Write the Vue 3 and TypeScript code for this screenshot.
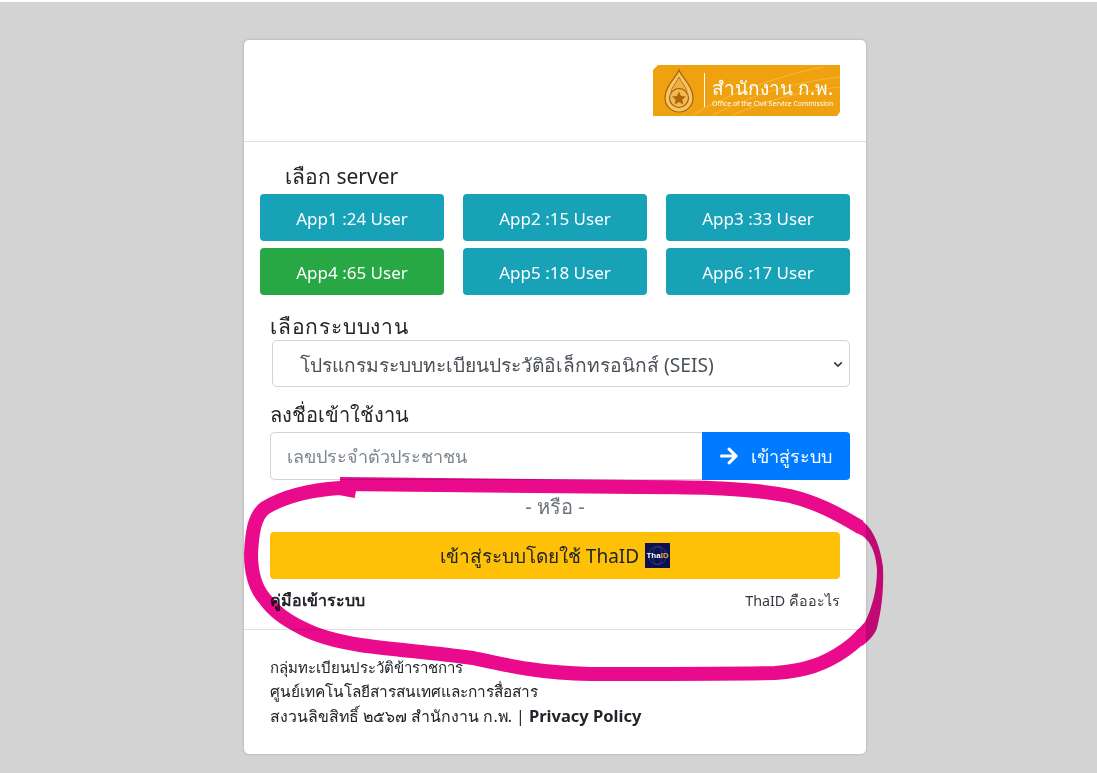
<template>
  <div class="page">
    <div class="card">
      <div class="card-header">
        <svg class="logo" viewBox="0 0 187 51" role="img">
          <path d="M5 0H187V47L184 51H0V5Z" fill="#f0a10f" />
          <path d="M60 50C95 32 135 18 187 12M80 50C110 36 150 26 187 22M40 50C80 26 130 10 170 2" fill="none" stroke="#f7c25a" stroke-width="0.7" />
          <path d="M26 5C29 13 40 21 40 33A14 14 0 0 1 12 33C12 21 23 13 26 5Z" fill="#f6c566" stroke="#a8650a" stroke-width="1.2" />
          <path d="M26 12C28 17 34 23 34 27H18C18 23 24 17 26 12Z" fill="#eeb040" stroke="#a8650a" stroke-width="0.8" />
          <circle cx="26" cy="33" r="9.500" fill="#f3b850" stroke="#9c5c08" stroke-width="1.1" />
          <path d="M26 26.500L28 31L33 31.500L29.300 34.800L30.300 39.600L26 37.100L21.700 39.600L22.700 34.800L19 31.500L24 31Z" fill="#b0640c" />
          <rect x="51" y="8" width="1" height="34" fill="#fff" />
          <text x="59" y="30" class="logo-th">สำนักงาน ก.พ.</text>
          <text x="59" y="41" class="logo-en">Office of the Civil Service Commission</text>
        </svg>
      </div>

      <div class="card-body">
        <h5 class="server-title">เลือก server</h5>
        <div class="server-grid">
          <button
            v-for="s in servers"
            :key="s.name"
            class="btn server"
            :class="{ active: s.active }"
          >
            {{ s.name }} :{{ s.users }} User
          </button>
        </div>

        <label class="field-label system-label" for="system">เลือกระบบงาน</label>
        <div class="select-wrap">
          <select id="system" class="system-select">
            <option>โปรแกรมระบบทะเบียนประวัติอิเล็กทรอนิกส์ (SEIS)</option>
          </select>
          <svg class="chevron" viewBox="0 0 12 8">
            <path d="M1.500 1.500L6 6L10.500 1.500" fill="none" stroke="#343a40" stroke-width="2" />
          </svg>
        </div>

        <label class="field-label login-label" for="cid">ลงชื่อเข้าใช้งาน</label>
        <div class="input-group">
          <input id="cid" class="cid-input" type="text" placeholder="เลขประจำตัวประชาชน" />
          <button class="btn login">
            <svg class="arrow" viewBox="0 0 448 512">
              <path
                fill="currentColor"
                d="M190.5 66.9l22.2-22.2c9.4-9.4 24.6-9.4 33.9 0L441 239c9.4 9.4 9.4 24.6 0 33.9L246.6 467.3c-9.4 9.4-24.6 9.4-33.9 0l-22.2-22.2c-9.5-9.5-9.3-25 .4-34.3L311.4 296H24c-13.3 0-24-10.7-24-24v-32c0-13.3 10.7-24 24-24h287.4L190.9 101.2c-9.8-9.3-10-24.8-.4-34.3z"
              />
            </svg>
            เข้าสู่ระบบ
          </button>
        </div>

        <div class="divider-text">- หรือ -</div>

        <button class="btn thaid">
          เข้าสู่ระบบโดยใช้ ThaID
          <span class="thaid-badge">
            <svg class="badge-globe" viewBox="0 0 25 25">
              <circle cx="12.500" cy="12.500" r="9" fill="none" stroke="#3c4580" stroke-width="0.8" />
              <ellipse cx="12.500" cy="12.500" rx="4.500" ry="9" fill="none" stroke="#3c4580" stroke-width="0.6" />
            </svg>
            <b>Tha</b><i>ID</i>
          </span>
        </button>

        <div class="links">
          <a class="manual">คู่มือเข้าระบบ</a>
          <a class="what">ThaID คืออะไร</a>
        </div>
      </div>

      <div class="card-footer">
        <div>กลุ่มทะเบียนประวัติข้าราชการ</div>
        <div class="line-wide">ศูนย์เทคโนโลยีสารสนเทศและการสื่อสาร</div>
        <div class="line-copy">สงวนลิขสิทธิ์ ๒๕๖๗ สำนักงาน ก.พ. | <strong>Privacy Policy</strong></div>
      </div>
    </div>

    <!-- วงปากกาสีชมพูที่วาดทับภาพ -->
    <svg class="scribble" viewBox="0 0 1097 773">
      <path
        class="ink"
        d="M356 489L340 486C310 488 283 495 265 506C254 514 252 532 251 552C251 570 254 584 264 596C274 610 286 618 302 626C317 634 335 639 360 643C395 648 430 650 473 656C510 664 540 671 590 672C650 672 720 672 775 671C805 669 825 662 845 648C852 643 858 638 863 632"
      />
      <path class="ink" d="M340 482C450 484 560 484 640 485C700 485 750 486 790 494C815 500 835 510 860 525" />
      <path
        class="ink-fill"
        d="M860 518C870 522 880 540 883 565C884 590 881 610 877 626C875 632 870 638 862 644L852 634L865 620C871 608 877 590 877 568C876 548 868 534 856 531Z"
      />
    </svg>
  </div>
</template>

<script setup lang="ts">
interface Server {
  name: string
  users: number
  active?: boolean
}

const servers: Server[] = [
  { name: 'App1', users: 24 },
  { name: 'App2', users: 15 },
  { name: 'App3', users: 33 },
  { name: 'App4', users: 65, active: true },
  { name: 'App5', users: 18 },
  { name: 'App6', users: 17 },
]
</script>

<style>
html,
body {
  margin: 0;
  background: #d3d3d3;
}
</style>

<style scoped>
.page {
  position: relative;
  box-sizing: border-box;
  width: 1097px;
  height: 773px;
  overflow: hidden;
  padding: 38px 0 0 244px;
  background: #d3d3d3;
  border-top: 2px solid #fff;
  font-family: "Noto Sans", sans-serif;
  color: #212529;
}

.card {
  box-sizing: border-box;
  width: 622px;
  height: 714px;
  background: #fff;
  border-radius: 5px;
  box-shadow: 0 0 3px rgba(0, 0, 0, 0.2);
  display: flex;
  flex-direction: column;
}

.card-header {
  height: 102px;
  box-sizing: border-box;
  padding: 25px 26px 0 0;
  border-bottom: 1px solid #dfdfdf;
  display: flex;
  justify-content: flex-end;
}

.logo {
  width: 187px;
  height: 51px;
}

.logo-th {
  font-size: 19px;
  fill: #fff;
}

.logo-en {
  font-size: 6.900px;
  fill: #fff;
}

.card-body {
  flex: 1;
  padding: 0 16px 0 26px;
}

.server-title {
  margin: 21px 0 5px 15px;
  font-size: 21px;
  line-height: 26px;
  font-weight: 400;
}

.server-grid {
  margin-left: -10px;
  display: grid;
  grid-template-columns: repeat(3, 184px);
  column-gap: 19px;
  row-gap: 7px;
}

.btn {
  border: 0;
  border-radius: 4px;
  font-family: inherit;
  cursor: pointer;
}

.server {
  height: 47px;
  padding-top: 2px;
  background: #17a2b8;
  color: #fff;
  font-size: 17px;
}

.server.active {
  background: #28a745;
}

.field-label {
  display: block;
  margin-top: 18px;
  font-size: 20px;
  line-height: 26px;
}

.system-label {
  font-size: 21px;
  letter-spacing: 0.8px;
}

.select-wrap {
  position: relative;
  width: 578px;
  height: 47px;
  margin: 1px 0 0 2px;
}

.system-select {
  display: block;
  appearance: none;
  box-sizing: border-box;
  width: 100%;
  height: 100%;
  padding: 2px 27px 0;
  background: #fff;
  border: 1px solid #ced4da;
  border-radius: 5px;
  font-family: inherit;
  font-size: 19.200px;
  color: #495057;
}

.chevron {
  position: absolute;
  right: 7px;
  top: 21px;
  width: 10px;
  height: 7px;
}

.login-label {
  margin-top: 15px;
}

.input-group {
  display: flex;
  width: 580px;
  height: 48px;
  margin-top: 4px;
}

.cid-input {
  flex: 1;
  min-width: 0;
  box-sizing: border-box;
  padding: 0 16px;
  border: 1px solid #ced4da;
  border-right: 0;
  border-radius: 5px 0 0 5px;
  font-family: inherit;
  font-size: 18px;
  outline: none;
}

.cid-input::placeholder {
  color: #7d868e;
}

.login {
  width: 148px;
  display: flex;
  align-items: center;
  justify-content: center;
  gap: 13px;
  background: #007bff;
  color: #fff;
  font-size: 18px;
  border-radius: 0 4px 4px 0;
}

.arrow {
  width: 18px;
  height: 20px;
}

.divider-text {
  margin-top: 14px;
  width: 570px;
  text-align: center;
  font-size: 20px;
  line-height: 26px;
  color: #6c757d;
}

.thaid {
  display: flex;
  align-items: center;
  justify-content: center;
  gap: 6px;
  width: 570px;
  height: 47px;
  margin-top: 12px;
  background: #ffc107;
  color: #212529;
  font-size: 19px;
}

.thaid-badge {
  position: relative;
  width: 25px;
  height: 25px;
  background: #0b1150;
  display: flex;
  align-items: center;
  justify-content: center;
  font-size: 8px;
  line-height: 1;
  font-family: "Liberation Sans", sans-serif;
}

.badge-globe {
  position: absolute;
  inset: 0;
}

.thaid-badge b {
  position: relative;
  color: #fff;
}

.thaid-badge i {
  position: relative;
  color: #e8a93a;
  font-style: normal;
  font-weight: 700;
}

.links {
  display: flex;
  justify-content: space-between;
  align-items: center;
  width: 570px;
  margin-top: 9px;
}

.manual {
  font-size: 16px;
  font-weight: 700;
}

.what {
  font-size: 14.300px;
  color: #343a40;
}

.card-footer {
  height: 125px;
  box-sizing: border-box;
  padding: 25px 26px 0;
  border-top: 1px solid #dfdfdf;
  font-size: 15px;
  line-height: 24.500px;
}

.line-wide {
  font-size: 15.400px;
}

.line-copy {
  font-size: 15.900px;
}

.line-copy strong {
  font-size: 16.500px;
}

.scribble {
  position: absolute;
  inset: 0;
  width: 1097px;
  height: 773px;
  pointer-events: none;
  mix-blend-mode: multiply;
}

.ink {
  fill: none;
  stroke: #ea0a8c;
  stroke-width: 14;
  stroke-linejoin: round;
}

.ink-fill {
  fill: #ea0a8c;
}
</style>
